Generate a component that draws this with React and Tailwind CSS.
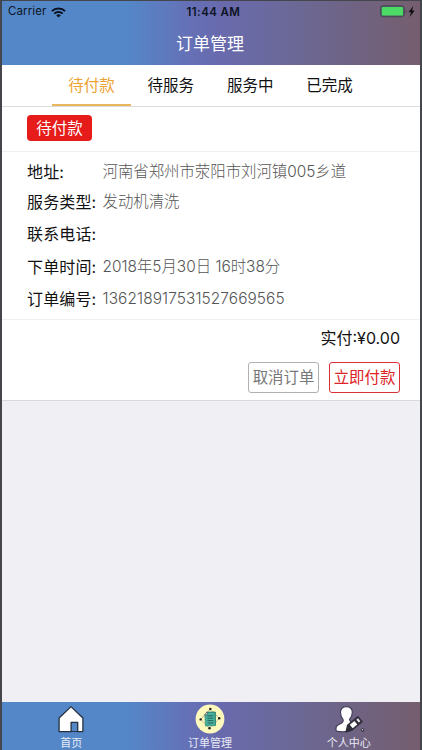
const tabs = ['待付款', '待服务', '服务中', '已完成'];

const details = [
  { label: '地址:', value: '河南省郑州市荥阳市刘河镇005乡道', row: 'h-[30px]' },
  { label: '服务类型:', value: '发动机清洗', row: 'h-[30px]' },
  { label: '联系电话:', value: '', row: 'h-[33px]' },
  { label: '下单时间:', value: '2018年5月30日 16时38分', row: 'h-[34px]' },
  { label: '订单编号:', value: '136218917531527669565', row: 'h-[30px] tracking-[0.1px]' },
];

const gradient =
  'bg-[linear-gradient(90deg,#5487c8_0%,#5487c8_30%,#6570b6_45%,#696aae_52%,#6b6999_68%,#6f6383_84%,#755e6e_100%)]';

function WifiIcon() {
  return (
    <svg width="15" height="11" viewBox="0 0 14 11" preserveAspectRatio="none">
      <path d="M7 10.6 4.9 8.4a3 3 0 0 1 4.2 0z" fill="#0b1220" />
      <path d="M3.1 6.6a5.4 5.4 0 0 1 7.8 0" fill="none" stroke="#0b1220" strokeWidth="1.9" />
      <path d="M.8 4.1a8.7 8.7 0 0 1 12.4 0" fill="none" stroke="#0b1220" strokeWidth="1.9" />
    </svg>
  );
}

function BatteryIcon() {
  return (
    <svg width="37" height="13" viewBox="0 0 37 13">
      <rect x=".6" y=".8" width="23.6" height="11" rx="2.6" fill="#4b5f67" stroke="#4b4754" strokeWidth="1" />
      <rect x="1.8" y="2" width="21.2" height="8.6" rx="1.2" fill="#4cd964" />
      <path d="M25.5 4.4c1.2.5 1.2 3.3 0 3.8z" fill="#4b4754" />
      <path d="M33.3 1 28.5 7.2h2.6L29.7 12l5-6.600h-2.700z" fill="#0c0b10" />
    </svg>
  );
}

function HomeIcon() {
  return (
    <svg width="28" height="28" viewBox="0 0 28 28">
      <path
        d="M14 1.600 2.100 13v13.600h12v-9.300h6.600v9.300h5.200V13z"
        fill="#fff"
        stroke="#26303f"
        strokeWidth="1.3"
        strokeLinejoin="round"
      />
      <path d="M14.1 26.6h6.6" stroke="#26303f" strokeWidth="1" />
    </svg>
  );
}

function OrderIcon() {
  return (
    <svg width="30" height="30" viewBox="0 0 30 30">
      <circle cx="15" cy="15" r="14.4" fill="#fdf9bd" />
      <path d="M15.3 5 24.4 14.3 14.5 24.4 5.7 15.4z" fill="none" stroke="#8b8f78" strokeWidth=".8" strokeDasharray="2 .8" />
      <path d="M11.5 8h9v12.5h-9z" fill="#5cc0ac" stroke="#287969" strokeWidth=".7" />
      <path d="M12.1 8.5h7.8l.6 13.2-10 .3-.7-11.5z" fill="#48b19e" stroke="#287969" strokeWidth=".6" />
      <path d="M9.6 10.8 12.2 8v2.8z" fill="#fff" stroke="#333" strokeWidth=".5" />
      <path d="M12.4 11.8h5.800M12.4 14.2h5.800M12.5 16.6h5.800M12.6 19h5.800" stroke="#265e58" strokeWidth=".9" />
      <g fill="#222">
        <circle cx="15.3" cy="5" r="1.2" />
        <circle cx="5.7" cy="15.4" r="1.2" />
        <circle cx="24.2" cy="14.3" r="1.2" />
        <circle cx="14.5" cy="24.2" r="1.2" />
      </g>
    </svg>
  );
}

function ProfileIcon() {
  return (
    <svg width="32" height="28" viewBox="-1 0 32 28">
      <path
        d="M12.4 1.6c3.8 0 6.1 2.4 5.9 6-.1 2.8-1.3 5-2.7 6.5-.3 1.7 1 2.5 2.4 3.1l-3 9.2c-4 .5-9.8.5-12.7-.4-1-3.3.3-5.7 3.1-6.8 2.5-1 4.2-2.1 3.8-4.3C7.7 13.4 6.6 11 6.5 7.6c-.2-3.6 2.1-6 5.9-6z"
        fill="#fff"
        stroke="#3b3954"
        strokeWidth="1.1"
      />
      <path
        d="m13.6 20.4 10.200-8.600 4.200 4.800-9.900 8.400-5.900 1.700z"
        fill="#302d3b"
        stroke="#302d3b"
        strokeWidth="1.4"
        strokeLinejoin="round"
      />
      <path d="m15.800 19.800 4.600-3.800 2.900 3.400-4.600 3.900z" fill="#fff" />
      <path d="m22.300 14.700 1.700-1.400 2.400 2.900-1.600 1.400z" fill="#e8e6ec" />
      <circle cx="28.7" cy="25" r="1.7" fill="#302d3b" />
      <circle cx="28.6" cy="24.8" r=".8" fill="#ddd" />
    </svg>
  );
}

const nav = [
  { label: '首页', icon: <HomeIcon /> },
  { label: '订单管理', icon: <OrderIcon /> },
  { label: '个人中心', icon: <ProfileIcon /> },
];

function StatusBar() {
  return (
    <div className="grid h-[21px] grid-cols-3 items-center pl-[6px] pr-[3px] text-[#0d1423]">
      <div className="flex items-center gap-[5px] pt-px leading-none">
        <span className="text-[11.5px] tracking-[0.1px]">Carrier</span>
        <WifiIcon />
      </div>
      <span className="pl-[2px] pt-[2px] text-center text-[11.5px] leading-none font-semibold tracking-[0.4px]">
        11:44 AM
      </span>
      <div className="flex justify-end">
        <BatteryIcon />
      </div>
    </div>
  );
}

function OrderCard() {
  return (
    <section className="h-[294px] border-b border-[#d9d9dc] bg-white">
      <div className="flex h-[45px] items-start border-b border-[#f0f0f2] pl-[25px] pt-[8px]">
        <span className="flex h-[26px] w-[65px] items-center justify-center rounded-[4px] bg-[#e51c1a] pt-px text-[15.5px] leading-none text-white">
          待付款
        </span>
      </div>

      <dl className="h-[168px] border-b border-[#f0f0f2] pl-[25px] pt-[5px]">
        {details.map((item) => (
          <div key={item.label} className={`flex items-center leading-none ${item.row}`}>
            <dt className="w-[75.5px] text-[16px] tracking-[0.15px] text-[#111]">{item.label}</dt>
            <dd className="text-[15.4px] font-light text-[#555]">{item.value}</dd>
          </div>
        ))}
      </dl>

      <p className="flex h-[36px] items-center justify-end pr-[20px] text-[16px] leading-none text-[#111]">
        实付:¥0.00
      </p>
      <div className="flex justify-end gap-[10px] pr-[20px] pt-[6px] text-[15.4px] leading-none">
        <button className="h-[31px] w-[71px] rounded-[3px] border border-[#b0b0b0] text-[#777]">取消订单</button>
        <button className="h-[31px] w-[71px] rounded-[3px] border border-[#dc3035] text-[#dc2226]">立即付款</button>
      </div>
    </section>
  );
}

export default function App() {
  return (
    <div className="flex h-[750px] w-[422px] flex-col overflow-hidden border-l-2 border-r-2 border-t border-[#45464c] bg-[#efeff4] font-[Inter,'Noto_Sans_CJK_SC',sans-serif]">
      <header className={`h-[64px] shrink-0 ${gradient}`}>
        <StatusBar />
        <h1 className="flex h-[43px] items-center justify-center pr-[2px] pt-[2px] text-[17px] leading-none text-white">
          订单管理
        </h1>
      </header>

      <nav className="flex h-[42px] shrink-0 justify-center border-b border-[#dcdce0] bg-white pr-px">
        {tabs.map((tab, i) => (
          <button
            key={tab}
            className={`h-[41px] w-[79.3px] border-b-2 pt-[3px] text-[15.5px] leading-none ${
              i === 0 ? 'border-b-[#e9b65c] text-[#eda334]' : 'border-b-transparent text-[#111]'
            }`}
          >
            {tab}
          </button>
        ))}
      </nav>

      <main className="flex-1">
        <OrderCard />
      </main>

      <footer className={`grid h-[48px] shrink-0 grid-cols-3 pr-[2px] ${gradient}`}>
        {nav.map((item) => (
          <div key={item.label} className="flex flex-col items-center pt-[2px]">
            <div className="flex h-[30px] items-center">{item.icon}</div>
            <span className="mt-[3px] text-[11px] leading-[12px] text-[#e8eaf5]">{item.label}</span>
          </div>
        ))}
      </footer>
    </div>
  );
}
